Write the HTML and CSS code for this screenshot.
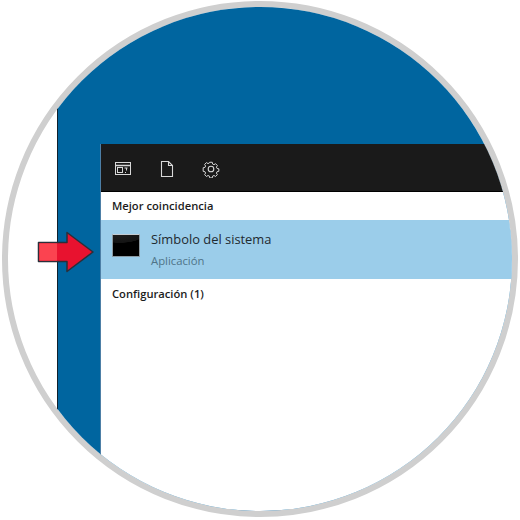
FILE: index.html
```html
<!DOCTYPE html>
<html lang="es">
<head>
    <meta charset="UTF-8">
    <title>Símbolo del sistema</title>
    <link rel="stylesheet" href="styles.css">
</head>
<body>
    <div class="circle">
        <div class="desktop">
            <div class="search-window">
                <div class="toolbar">
                    <svg class="tool-icon" width="18" height="18" viewBox="0 0 18 18" fill="none" stroke="#d8d8d8">
                        <rect x="1.5" y="2.5" width="15" height="12"/>
                        <path d="M2 5.5h14" stroke-width="1.6"/>
                        <rect x="3.5" y="7.5" width="5" height="5"/>
                        <path d="M10.5 8h3M12.5 8v2.5M11 12.5h1"/>
                    </svg>
                    <svg class="tool-icon" width="18" height="18" viewBox="0 0 18 18" fill="none" stroke="#d8d8d8" stroke-width="1.1">
                        <path d="M3.5 1.5h7l4 4v11h-11z"/>
                        <path d="M10.5 1.5v4h4"/>
                    </svg>
                    <svg class="tool-icon" width="18" height="18" viewBox="0 0 18 18" fill="none" stroke="#d8d8d8" stroke-width="1.1">
                        <path d="M7.6 1.5h2.8l.4 2 1.5.7 1.8-1.1 2 2-1.1 1.8.7 1.5 2 .4v2.8l-2 .4-.7 1.5 1.1 1.8-2 2-1.8-1.1-1.5.7-.4 2H7.6l-.4-2-1.5-.7-1.8 1.1-2-2 1.1-1.8-.7-1.5-2-.4V7.6l2-.4.7-1.5L1.9 3.9l2-2 1.8 1.1 1.5-.7z" transform="translate(.9 .9) scale(.9)"/>
                        <circle cx="9" cy="9" r="2.8"/>
                    </svg>
                </div>
                <div class="section-title">Mejor coincidencia</div>
                <div class="result">
                    <div class="cmd-icon"></div>
                    <div class="result-text">
                        <div class="result-name">Símbolo del sistema</div>
                        <div class="result-type">Aplicación</div>
                    </div>
                </div>
                <div class="section-title settings">Configuración (1)</div>
            </div>
        </div>
    </div>
    <svg class="arrow" width="60" height="46" viewBox="0 0 60 46">
        <path d="M2.5 13.5H31V3.5L57 23 31 42.5V32.5H2.5z" fill="#e8122f" stroke="#2b2f3a" stroke-width="1.5" stroke-linejoin="round"/>
        <path d="M3.3 14.3H21V31.7H3.3z" fill="#fb4350"/>
    </svg>
</body>
</html>
```

FILE: styles.css
```css
body {
    margin: 0;
    padding: 0;
    background-color: white;
    font-family: "Open Sans", "Noto Sans", sans-serif;
}
.circle {
    width: 516px;
    height: 516px;
    margin: 1px 2px;
    box-sizing: border-box;
    border: 6px solid #cfcfcf;
    border-radius: 50%;
    overflow: hidden;
    background-color: white;
}
.desktop {
    height: 100%;
    box-sizing: border-box;
    margin-left: 49px;
    padding: 137px 0 0 43px;
    background-color: #00659f;
    border-left: 1px solid #10202c;
}
.search-window {
    height: 100%;
    background-color: white;
    box-shadow: -1px 0 0 #4d7fa6;
}
.toolbar {
    height: 48px;
    display: flex;
    align-items: center;
    gap: 26px;
    padding-left: 13px;
    padding-top: 3px;
    box-sizing: border-box;
    background-color: #1a1a1a;
    border-bottom: 1px solid black;
}
.tool-icon {
    display: block;
}
.section-title {
    height: 28px;
    line-height: 28px;
    padding-left: 11px;
    font-size: 11.2px;
    font-weight: 600;
    color: #1c1c1c;
}
.result {
    height: 59px;
    display: flex;
    align-items: center;
    padding-left: 11px;
    background-color: #9bcdea;
}
.cmd-icon {
    width: 28px;
    height: 23px;
    box-sizing: border-box;
    margin-right: 11px;
    margin-bottom: 8px;
    border: 1px solid #8b9aa3;
    border-top-color: #c4ccd2;
    background: radial-gradient(ellipse 24px 8px at 25% 0, #1e1e1e 0%, #141414 95%, #000 100%);
    background-color: black;
}
.result-name {
    font-size: 12.9px;
    line-height: 17px;
    color: #1f2a30;
}
.result-type {
    font-size: 11.3px;
    line-height: 15px;
    margin-top: 5px;
    color: #4f7488;
}
.settings {
    margin-top: 1px;
}
.arrow {
    position: absolute;
    left: 36px;
    top: 229px;
}
```
